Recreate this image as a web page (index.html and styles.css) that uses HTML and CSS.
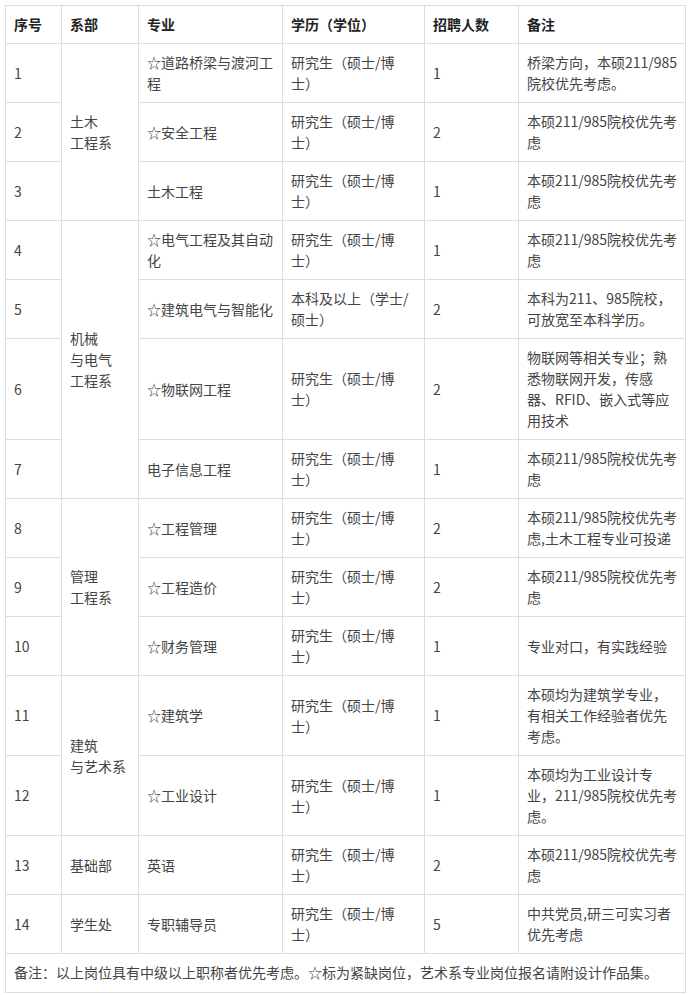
FILE: index.html
```html
<!DOCTYPE html>
<html lang="zh-CN">
<head>
<meta charset="utf-8">
<title>招聘岗位</title>
<link rel="stylesheet" href="styles.css">
</head>
<body>
<table class="jobs">
  <colgroup>
    <col class="c1"><col class="c2"><col class="c3"><col class="c4"><col class="c5"><col class="c6">
  </colgroup>
  <thead>
    <tr class="head">
      <th>序号</th><th>系部</th><th>专业</th><th>学历（学位）</th><th>招聘人数</th><th>备注</th>
    </tr>
  </thead>
  <tbody>
    <tr>
      <td>1</td>
      <td rowspan="3">土木<br>工程系</td>
      <td>☆道路桥梁与渡河工<br>程</td>
      <td>研究生（硕士/博<br>士）</td>
      <td>1</td>
      <td>桥梁方向，本硕211/985<br>院校优先考虑。</td>
    </tr>
    <tr>
      <td>2</td>
      <td>☆安全工程</td>
      <td>研究生（硕士/博<br>士）</td>
      <td>2</td>
      <td>本硕211/985院校优先考<br>虑</td>
    </tr>
    <tr>
      <td>3</td>
      <td>土木工程</td>
      <td>研究生（硕士/博<br>士）</td>
      <td>1</td>
      <td>本硕211/985院校优先考<br>虑</td>
    </tr>
    <tr>
      <td>4</td>
      <td rowspan="4">机械<br>与电气<br>工程系</td>
      <td>☆电气工程及其自动<br>化</td>
      <td>研究生（硕士/博<br>士）</td>
      <td>1</td>
      <td>本硕211/985院校优先考<br>虑</td>
    </tr>
    <tr>
      <td>5</td>
      <td>☆建筑电气与智能化</td>
      <td>本科及以上（学士/<br>硕士）</td>
      <td>2</td>
      <td>本科为211、985院校，<br>可放宽至本科学历。</td>
    </tr>
    <tr>
      <td>6</td>
      <td>☆物联网工程</td>
      <td>研究生（硕士/博<br>士）</td>
      <td>2</td>
      <td>物联网等相关专业；熟<br>悉物联网开发，传感<br>器、RFID、嵌入式等应<br>用技术</td>
    </tr>
    <tr>
      <td>7</td>
      <td>电子信息工程</td>
      <td>研究生（硕士/博<br>士）</td>
      <td>1</td>
      <td>本硕211/985院校优先考<br>虑</td>
    </tr>
    <tr>
      <td>8</td>
      <td rowspan="3">管理<br>工程系</td>
      <td>☆工程管理</td>
      <td>研究生（硕士/博<br>士）</td>
      <td>2</td>
      <td>本硕211/985院校优先考<br>虑,土木工程专业可投递</td>
    </tr>
    <tr>
      <td>9</td>
      <td>☆工程造价</td>
      <td>研究生（硕士/博<br>士）</td>
      <td>2</td>
      <td>本硕211/985院校优先考<br>虑</td>
    </tr>
    <tr>
      <td>10</td>
      <td>☆财务管理</td>
      <td>研究生（硕士/博<br>士）</td>
      <td>1</td>
      <td>专业对口，有实践经验</td>
    </tr>
    <tr>
      <td>11</td>
      <td rowspan="2">建筑<br>与艺术系</td>
      <td>☆建筑学</td>
      <td>研究生（硕士/博<br>士）</td>
      <td>1</td>
      <td>本硕均为建筑学专业，<br>有相关工作经验者优先<br>考虑。</td>
    </tr>
    <tr>
      <td>12</td>
      <td>☆工业设计</td>
      <td>研究生（硕士/博<br>士）</td>
      <td>1</td>
      <td>本硕均为工业设计专<br>业，211/985院校优先考<br>虑。</td>
    </tr>
    <tr>
      <td>13</td>
      <td>基础部</td>
      <td>英语</td>
      <td>研究生（硕士/博<br>士）</td>
      <td>2</td>
      <td>本硕211/985院校优先考<br>虑</td>
    </tr>
    <tr>
      <td>14</td>
      <td>学生处</td>
      <td>专职辅导员</td>
      <td>研究生（硕士/博<br>士）</td>
      <td>5</td>
      <td>中共党员,研三可实习者<br>优先考虑</td>
    </tr>
    <tr>
      <td class="note" colspan="6">备注：以上岗位具有中级以上职称者优先考虑。☆标为紧缺岗位，艺术系专业岗位报名请附设计作品集。</td>
    </tr>
  </tbody>
</table>
</body>
</html>
```

FILE: styles.css
```css
html, body {
  margin: 0;
  padding: 0;
  background: #ffffff;
}

body {
  padding: 5px;
  font-family: "Noto Sans CJK SC", "Noto Sans", sans-serif;
  font-size: 14px;
  color: #444444;
}

.jobs {
  border-collapse: collapse;
  table-layout: fixed;
  width: 680px;
}

.c1 { width: 56px; }
.c2 { width: 77px; }
.c3 { width: 144px; }
.c4 { width: 142px; }
.c5 { width: 94px; }
.c6 { width: 167px; }

.jobs th,
.jobs td {
  border: 1px solid #dddddd;
  padding: 8px 8px;
  line-height: 21px;
  text-align: left;
  vertical-align: middle;
  white-space: nowrap;
  overflow: hidden;
}

.jobs th {
  font-weight: bold;
  color: #222222;
}

.jobs td.note {
  padding-top: 8px;
  padding-bottom: 9px;
}
```
